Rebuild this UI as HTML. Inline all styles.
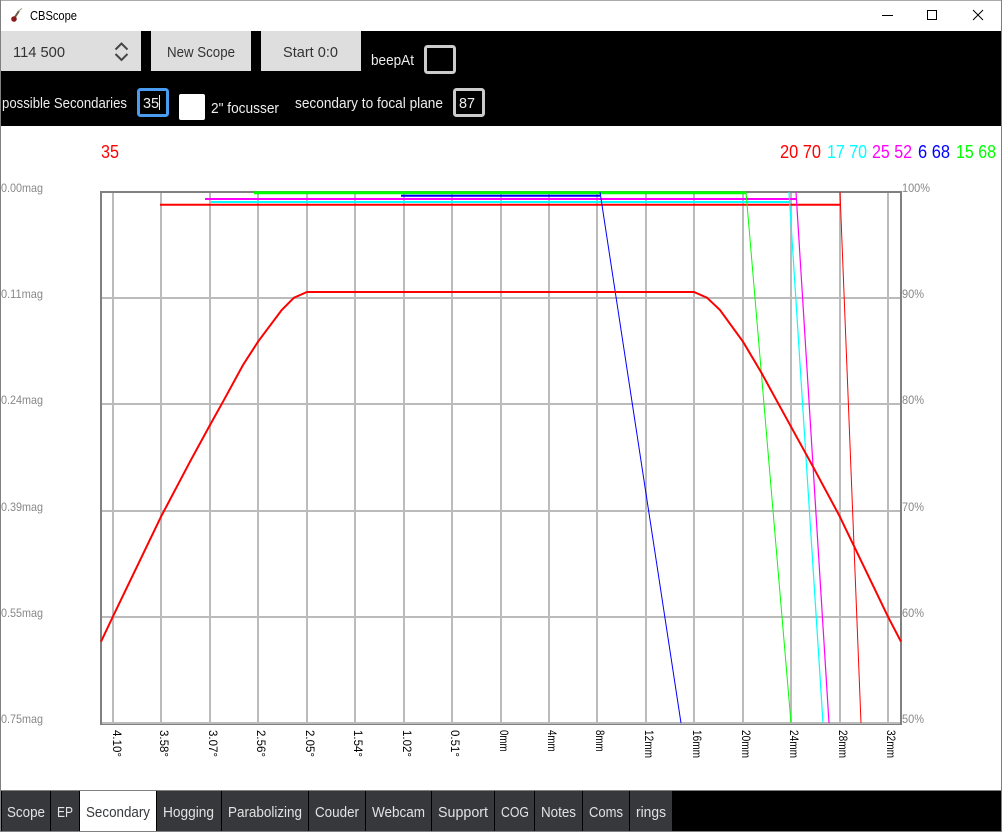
<!DOCTYPE html>
<html><head><meta charset="utf-8"><title>CBScope</title>
<style>
html,body{margin:0;padding:0;background:#fff;width:1002px;height:832px;overflow:hidden}
svg{display:block;position:absolute;left:0;top:0}
text{font-family:"Liberation Sans",sans-serif}
</style></head><body>
<svg width="1002" height="832" viewBox="0 0 1002 832" xmlns="http://www.w3.org/2000/svg">
<rect width="1002" height="832" fill="#fff"/>
<!-- title bar -->
<path d="M1 0H1002" stroke="#555" stroke-width="1"/>
<path d="M13 20L19 11" stroke="#6a5a4a" stroke-width="2"/>
<path d="M17 12L22 8.500" stroke="#998" stroke-width="1"/>
<circle cx="14" cy="19" r="2.800" fill="#8a1a1a"/>
<text x="30" y="20" font-size="13" fill="#000" textLength="47" lengthAdjust="spacingAndGlyphs">CBScope</text>
<path d="M882 15.500H893" stroke="#000" stroke-width="1"/>
<rect x="927.500" y="10.500" width="9" height="9" fill="none" stroke="#000" stroke-width="1"/>
<path d="M973 10L983 20M983 10L973 20" stroke="#000" stroke-width="1"/>
<!-- toolbar -->
<rect x="1" y="31" width="1000" height="95" fill="#000"/>
<rect x="1" y="31" width="140" height="40" fill="#dedede"/>
<rect x="151" y="31" width="100" height="40" fill="#dedede"/>
<rect x="261" y="31" width="100" height="40" fill="#dedede"/>
<text x="13" y="57" font-size="15" fill="#333" textLength="52" lengthAdjust="spacingAndGlyphs">114 500</text>
<path d="M115.500 49.500L121.500 43.500L127.500 49.500M115.500 54L121.500 60L127.500 54" fill="none" stroke="#444" stroke-width="2"/>
<text x="167" y="57" font-size="15" fill="#333" textLength="68" lengthAdjust="spacingAndGlyphs">New Scope</text>
<text x="283" y="57" font-size="15" fill="#333" textLength="55" lengthAdjust="spacingAndGlyphs">Start 0:0</text>
<text x="371" y="65" font-size="15" fill="#eee" textLength="43" lengthAdjust="spacingAndGlyphs">beepAt</text>
<rect x="425.500" y="46.500" width="29" height="26" rx="2" fill="#000" stroke="#ccc" stroke-width="3"/>
<text x="2" y="108" font-size="15" fill="#eee" textLength="125" lengthAdjust="spacingAndGlyphs">possible Secondaries</text>
<rect x="138.500" y="89.500" width="29" height="26" rx="2" fill="#000" stroke="#4a9cf0" stroke-width="3"/>
<text x="143" y="108" font-size="15" fill="#eee" textLength="16" lengthAdjust="spacingAndGlyphs">35</text>
<path d="M159.500 95V110" stroke="#eee" stroke-width="1"/>
<rect x="179" y="94" width="26" height="26" rx="2" fill="#fff"/>
<text x="211" y="113" font-size="15" fill="#eee" textLength="68" lengthAdjust="spacingAndGlyphs">2" focusser</text>
<text x="295" y="108" font-size="15" fill="#eee" textLength="148" lengthAdjust="spacingAndGlyphs">secondary to focal plane</text>
<rect x="454.500" y="89.500" width="29" height="26" rx="2" fill="#000" stroke="#ccc" stroke-width="3"/>
<text x="459" y="108" font-size="15" fill="#eee" textLength="16" lengthAdjust="spacingAndGlyphs">87</text>
<!-- header labels -->
<text x="101" y="158" font-size="18" fill="#f00" textLength="18" lengthAdjust="spacingAndGlyphs">35</text>
<text x="780" y="158" font-size="18" fill="#f00" textLength="41" lengthAdjust="spacingAndGlyphs">20 70</text>
<text x="827" y="158" font-size="18" fill="#0ff" textLength="40" lengthAdjust="spacingAndGlyphs">17 70</text>
<text x="872" y="158" font-size="18" fill="#f0f" textLength="40" lengthAdjust="spacingAndGlyphs">25 52</text>
<text x="918" y="158" font-size="18" fill="#00f" textLength="32" lengthAdjust="spacingAndGlyphs">6 68</text>
<text x="956" y="158" font-size="18" fill="#0f0" textLength="40" lengthAdjust="spacingAndGlyphs">15 68</text>
<!-- grid -->
<g stroke="#bbb" stroke-width="2" fill="none">
<path d="M113 192V723M161 192V723M210 192V723M258 192V723M307 192V723M355 192V723M404 192V723M452 192V723M501 192V723M549 192V723M597 192V723M646 192V723M694 192V723M743 192V723M791 192V723M840 192V723M888 192V723"/>
<path d="M101 298H901M101 404H901M101 511H901M101 617H901"/>
<path d="M101 723H901"/>
</g>
<path d="M101 192V724M901 192V724M100 192H902" stroke="#808080" stroke-width="2" fill="none"/>
<path d="M100 724.500H902" stroke="#808080" stroke-width="1" fill="none"/>
<!-- sec bars -->
<g fill="none">
<path d="M254 192.700H746" stroke="#0f0" stroke-width="3"/>
<path d="M401 195.700H600" stroke="#00f" stroke-width="2"/>
<path d="M205 199H796" stroke="#f0f" stroke-width="2"/>
<path d="M211 202H790" stroke="#0ff" stroke-width="2"/>
<path d="M160 204.700H840" stroke="#f00" stroke-width="2"/>
<path d="M600 192L681 723" stroke="#00f" stroke-width="1"/>
<path d="M746 192L791 723" stroke="#0f0" stroke-width="1"/>
<path d="M789 192L823 723" stroke="#0ff" stroke-width="1.200"/>
<path d="M796 192L829 723" stroke="#f0f" stroke-width="1.200"/>
<path d="M840 192L861 723" stroke="#f00" stroke-width="1"/>
<polyline stroke="#f00" stroke-width="2" points="101,641.700 112.700,617 161,516.700 190,461.700 210,425 223,401.700 243,365 258,341.700 281.700,310 294,297.700 307,292 694,292 707,297.700 720,310 743,341.700 761,372 791,426.700 813,466.700 839,515 888,616.700 901,641.700"/>
</g>
<!-- axis labels -->
<g font-size="12" fill="#888">
<text x="1" y="192" textLength="42" lengthAdjust="spacingAndGlyphs">0.00mag</text>
<text x="1" y="298" textLength="42" lengthAdjust="spacingAndGlyphs">0.11mag</text>
<text x="1" y="404" textLength="42" lengthAdjust="spacingAndGlyphs">0.24mag</text>
<text x="1" y="511" textLength="42" lengthAdjust="spacingAndGlyphs">0.39mag</text>
<text x="1" y="617" textLength="42" lengthAdjust="spacingAndGlyphs">0.55mag</text>
<text x="1" y="723" textLength="42" lengthAdjust="spacingAndGlyphs">0.75mag</text>
<text x="902" y="192" textLength="28" lengthAdjust="spacingAndGlyphs">100%</text>
<text x="902" y="298" textLength="22" lengthAdjust="spacingAndGlyphs">90%</text>
<text x="902" y="404" textLength="22" lengthAdjust="spacingAndGlyphs">80%</text>
<text x="902" y="511" textLength="22" lengthAdjust="spacingAndGlyphs">70%</text>
<text x="902" y="617" textLength="22" lengthAdjust="spacingAndGlyphs">60%</text>
<text x="902" y="723" textLength="22" lengthAdjust="spacingAndGlyphs">50%</text>
</g>
<g font-size="12" fill="#000">
<text transform="translate(113,730) rotate(90)" textLength="27" lengthAdjust="spacingAndGlyphs">4.10°</text>
<text transform="translate(160,730) rotate(90)" textLength="27" lengthAdjust="spacingAndGlyphs">3.58°</text>
<text transform="translate(209,730) rotate(90)" textLength="27" lengthAdjust="spacingAndGlyphs">3.07°</text>
<text transform="translate(257,730) rotate(90)" textLength="27" lengthAdjust="spacingAndGlyphs">2.56°</text>
<text transform="translate(306,730) rotate(90)" textLength="27" lengthAdjust="spacingAndGlyphs">2.05°</text>
<text transform="translate(354,730) rotate(90)" textLength="27" lengthAdjust="spacingAndGlyphs">1.54°</text>
<text transform="translate(403,730) rotate(90)" textLength="27" lengthAdjust="spacingAndGlyphs">1.02°</text>
<text transform="translate(451,730) rotate(90)" textLength="27" lengthAdjust="spacingAndGlyphs">0.51°</text>
<text transform="translate(500,730) rotate(90)" textLength="21.500" lengthAdjust="spacingAndGlyphs">0mm</text>
<text transform="translate(548,730) rotate(90)" textLength="21.500" lengthAdjust="spacingAndGlyphs">4mm</text>
<text transform="translate(596,730) rotate(90)" textLength="21.500" lengthAdjust="spacingAndGlyphs">8mm</text>
<text transform="translate(645,730) rotate(90)" textLength="28" lengthAdjust="spacingAndGlyphs">12mm</text>
<text transform="translate(693,730) rotate(90)" textLength="28" lengthAdjust="spacingAndGlyphs">16mm</text>
<text transform="translate(742,730) rotate(90)" textLength="28" lengthAdjust="spacingAndGlyphs">20mm</text>
<text transform="translate(790,730) rotate(90)" textLength="28" lengthAdjust="spacingAndGlyphs">24mm</text>
<text transform="translate(839,730) rotate(90)" textLength="28" lengthAdjust="spacingAndGlyphs">28mm</text>
<text transform="translate(887,730) rotate(90)" textLength="28" lengthAdjust="spacingAndGlyphs">32mm</text>
</g>
<!-- tab bar -->
<rect x="1" y="790" width="1000" height="1" fill="#808080"/>
<rect x="1" y="791" width="1000" height="40" fill="#000"/>
<g fill="#36383b">
<rect x="2" y="791" width="48" height="40"/>
<rect x="51" y="791" width="28" height="40"/>
<rect x="157" y="791" width="64" height="40"/>
<rect x="222" y="791" width="86" height="40"/>
<rect x="309" y="791" width="56" height="40"/>
<rect x="366" y="791" width="65" height="40"/>
<rect x="432" y="791" width="62" height="40"/>
<rect x="495" y="791" width="39" height="40"/>
<rect x="535" y="791" width="47" height="40"/>
<rect x="583" y="791" width="46" height="40"/>
<rect x="630" y="791" width="42" height="40"/>
</g>
<rect x="80" y="791" width="76" height="40" fill="#fff"/>
<g font-size="15" fill="#e2e2e2">
<text x="7" y="817" textLength="38" lengthAdjust="spacingAndGlyphs">Scope</text>
<text x="57" y="817" textLength="16" lengthAdjust="spacingAndGlyphs">EP</text>
<text x="86" y="817" fill="#36383b" textLength="64" lengthAdjust="spacingAndGlyphs">Secondary</text>
<text x="163" y="817" textLength="51" lengthAdjust="spacingAndGlyphs">Hogging</text>
<text x="228" y="817" textLength="74" lengthAdjust="spacingAndGlyphs">Parabolizing</text>
<text x="315" y="817" textLength="44" lengthAdjust="spacingAndGlyphs">Couder</text>
<text x="372" y="817" textLength="53" lengthAdjust="spacingAndGlyphs">Webcam</text>
<text x="438" y="817" textLength="50" lengthAdjust="spacingAndGlyphs">Support</text>
<text x="501" y="817" textLength="28" lengthAdjust="spacingAndGlyphs">COG</text>
<text x="541" y="817" textLength="35" lengthAdjust="spacingAndGlyphs">Notes</text>
<text x="589" y="817" textLength="34" lengthAdjust="spacingAndGlyphs">Coms</text>
<text x="636" y="817" textLength="30" lengthAdjust="spacingAndGlyphs">rings</text>
</g>
<!-- window border -->
<path d="M0.500 0V832M1001.500 0V832M0 831.500H1002" stroke="#808080" stroke-width="1" fill="none"/>
</svg>
</body></html>
